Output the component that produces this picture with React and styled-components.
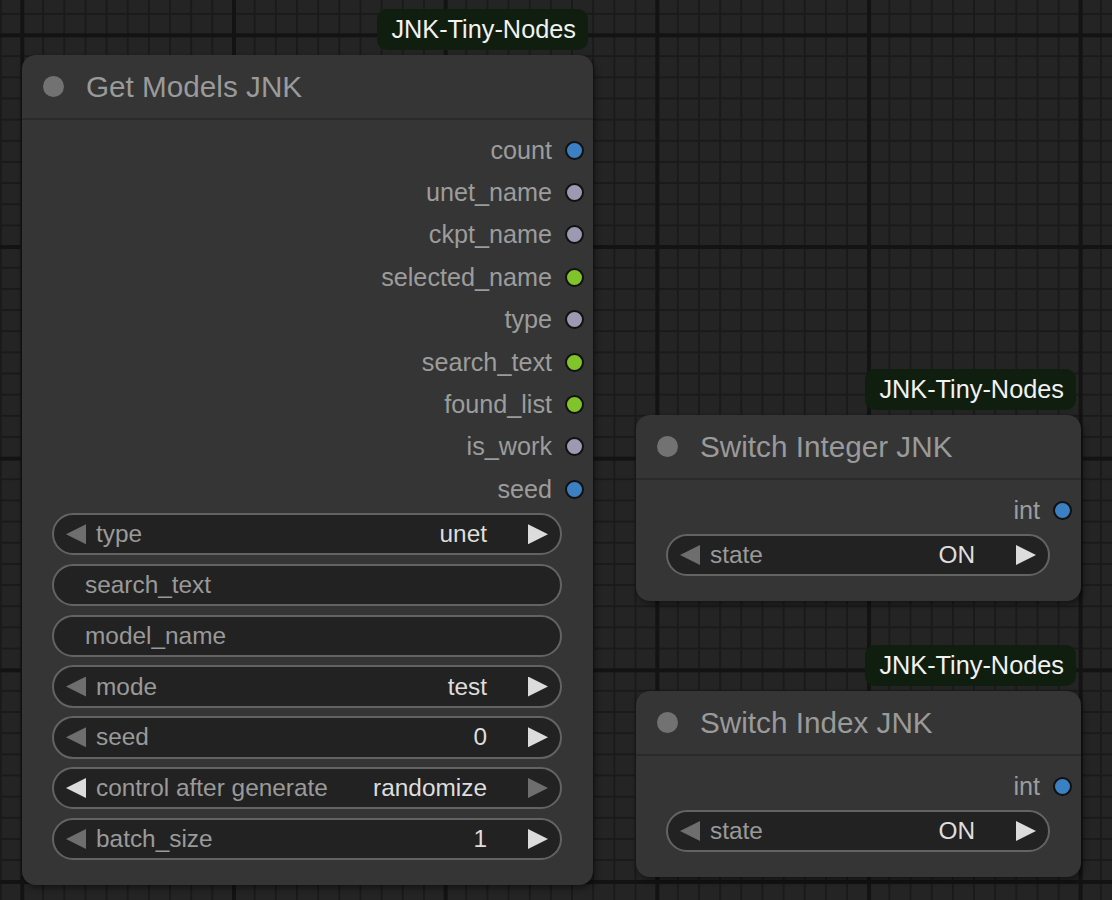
import React from 'react';
import styled, { createGlobalStyle } from 'styled-components';

const GlobalStyle = createGlobalStyle`
  html, body {
    margin: 0;
    padding: 0;
    background: #232323;
  }
  body {
    font-family: "Liberation Sans", Arial, sans-serif;
  }
`;

// canvas with the litegraph style grid
const Canvas = styled.div`
  position: relative;
  width: 1112px;
  height: 900px;
  overflow: hidden;
  background-color: #242424;
  background-image:
    linear-gradient(to right, #131313 3.5px, transparent 3.5px),
    linear-gradient(to bottom, #131313 3.5px, transparent 3.5px),
    linear-gradient(to right, #1a1a1a 2px, transparent 2px),
    linear-gradient(to bottom, #1a1a1a 2px, transparent 2px);
  background-size: 211.7px 211.7px, 211.7px 211.7px, 21.17px 21.17px, 21.17px 21.17px;
  background-position: 20.3px 0, 0 33.3px, 21px 0, 0 12.9px;
`;

const Node = styled.div`
  position: absolute;
  left: ${p => p.left}px;
  top: ${p => p.top}px;
  width: ${p => p.width}px;
  background: #353535;
  border-radius: 14px;
  box-shadow: 2px 3px 6px rgba(0, 0, 0, 0.45);
  display: flex;
  flex-direction: column;
`;

const Badge = styled.div`
  position: absolute;
  right: 5px;
  bottom: calc(100% + 5px);
  height: 41px;
  padding: 0 12px 0 14px;
  display: flex;
  align-items: center;
  background: #0f1e0f;
  border-radius: 10px;
  color: #f2f2f2;
  font-size: 25.3px;
  white-space: nowrap;
`;

const Title = styled.div`
  height: 63px;
  border-bottom: 2px solid #2a2a2a;
  display: flex;
  align-items: center;
  padding-left: 21px;
  gap: 22px;
  color: #9a9a9a;
  font-size: 29.7px;
  white-space: nowrap;
`;

const TitleDot = styled.span`
  width: 21px;
  height: 21px;
  border-radius: 50%;
  background: #727272;
  flex: none;
`;

const Body = styled.div`
  padding: 9px 0 25px;
  display: flex;
  flex-direction: column;
`;

const Outputs = styled.div`
  display: flex;
  flex-direction: column;
  margin-bottom: 2.5px;
`;

const OutRow = styled.div`
  height: 42.4px;
  display: flex;
  align-items: center;
  justify-content: flex-end;
  gap: 12.5px;
  padding-right: 9.5px;
  color: #9c9c9c;
  font-size: 25.2px;
`;

const Dot = styled.span`
  width: 19px;
  height: 19px;
  box-sizing: border-box;
  border-radius: 50%;
  border: 2px solid #111;
  background: ${p => p.color};
  flex: none;
`;

const Widgets = styled.div`
  display: flex;
  flex-direction: column;
  gap: 8.4px;
  padding: 0 31px 0 30px;
`;

const Widget = styled.div`
  height: 42.4px;
  box-sizing: border-box;
  border: 2px solid #636363;
  border-radius: 22px;
  background: #222;
  display: flex;
  align-items: center;
  padding: 0 ${p => (p.text ? 0 : 12)}px 0 ${p => (p.text ? 31 : 12)}px;
  font-size: 24.4px;
  color: #999;
  white-space: nowrap;
`;

const Arrow = styled.span`
  width: 20px;
  height: 20px;
  flex: none;
  background: ${p => (p.on ? '#dcdcdc' : '#6e6e6e')};
  clip-path: ${p =>
    p.dir === 'left'
      ? 'polygon(0 50%, 100% 0, 100% 100%)'
      : 'polygon(0 0, 100% 50%, 0 100%)'};
`;

const Label = styled.span`
  flex: 1;
  margin-left: 10px;
  color: #9a9a9a;
`;

const Value = styled.span`
  color: #dedede;
  margin-right: 41px;
`;

const colors = {
  int: '#3a80c2',
  any: '#9c9ab2',
  str: '#80c42a'
};

const ComboWidget = ({ label, value, left, right }) => (
  <Widget>
    <Arrow dir="left" on={left} />
    <Label>{label}</Label>
    <Value>{value}</Value>
    <Arrow dir="right" on={right} />
  </Widget>
);

const TextWidget = ({ label }) => (
  <Widget text>{label}</Widget>
);

const outputs = [
  ['count', 'int'],
  ['unet_name', 'any'],
  ['ckpt_name', 'any'],
  ['selected_name', 'str'],
  ['type', 'any'],
  ['search_text', 'str'],
  ['found_list', 'str'],
  ['is_work', 'any'],
  ['seed', 'int']
];

const SwitchNode = ({ title, top }) => (
  <Node left={636} top={top} width={445}>
    <Badge>JNK-Tiny-Nodes</Badge>
    <Title>
      <TitleDot />
      {title}
    </Title>
    <Body>
      <Outputs>
        <OutRow>
          int
          <Dot color={colors.int} />
        </OutRow>
      </Outputs>
      <Widgets>
        <ComboWidget label="state" value="ON" right />
      </Widgets>
    </Body>
  </Node>
);

const App = () => {
  return (
    <Canvas>
      <GlobalStyle />
      <Node left={22} top={55} width={571}>
        <Badge>JNK-Tiny-Nodes</Badge>
        <Title>
          <TitleDot />
          Get Models JNK
        </Title>
        <Body>
          <Outputs>
            {outputs.map(([name, type]) => (
              <OutRow key={name}>
                {name}
                <Dot color={colors[type]} />
              </OutRow>
            ))}
          </Outputs>
          <Widgets>
            <ComboWidget label="type" value="unet" right />
            <TextWidget label="search_text" />
            <TextWidget label="model_name" />
            <ComboWidget label="mode" value="test" right />
            <ComboWidget label="seed" value="0" right />
            <ComboWidget label="control after generate" value="randomize" left />
            <ComboWidget label="batch_size" value="1" right />
          </Widgets>
        </Body>
      </Node>
      <SwitchNode title="Switch Integer JNK" top={415} />
      <SwitchNode title="Switch Index JNK" top={691} />
    </Canvas>
  );
};

export default App;
